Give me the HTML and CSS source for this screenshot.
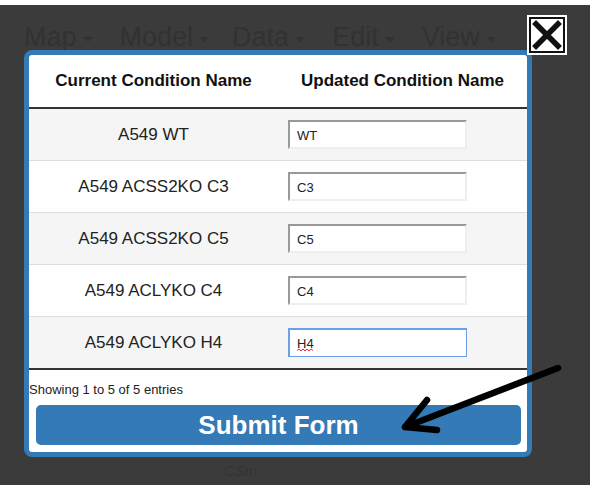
FILE: index.html
```html
<!DOCTYPE html>
<html>
<head>
<meta charset="utf-8">
<link rel="stylesheet" href="styles.css">
</head>
<body>
<div class="backdrop">
  <nav class="menu">
    <span>Map <i class="caret"></i></span>
    <span class="tight">Model <i class="caret"></i></span>
    <span>Data <i class="caret"></i></span>
    <span>Edit <i class="caret"></i></span>
    <span>View <i class="caret"></i></span>
  </nav>
  <div class="faint csm">CSm</div>

  <div class="modal">
    <table class="cond-table">
      <thead>
        <tr><th>Current Condition Name</th><th>Updated Condition Name</th></tr>
      </thead>
      <tbody>
        <tr><td>A549 WT</td><td class="edit"><input class="field" type="text" value="WT"></td></tr>
        <tr><td>A549 ACSS2KO C3</td><td class="edit"><input class="field" type="text" value="C3"></td></tr>
        <tr><td>A549 ACSS2KO C5</td><td class="edit"><input class="field" type="text" value="C5"></td></tr>
        <tr><td>A549 ACLYKO C4</td><td class="edit"><input class="field" type="text" value="C4"></td></tr>
        <tr><td>A549 ACLYKO H4</td><td class="edit"><span class="field-wrap"><input class="field field-focus" type="text" value="H4"><svg class="squiggle" width="16" height="4" viewBox="0 0 16 4"><path d="M0 2.5 L2 1 L4 3 L6 1 L8 3 L10 1 L12 3 L14 1 L16 2.5" stroke="#e23" stroke-width="1" fill="none"/></svg></span></td></tr>
      </tbody>
    </table>
    <div class="info">Showing 1 to 5 of 5 entries</div>
    <button class="submit">Submit Form</button>
  </div>

  <div class="close">
    <svg width="40" height="40" viewBox="0 0 40 40">
      <rect x="0" y="0" width="40" height="40" fill="#fff"/>
      <rect x="3" y="3" width="34" height="34" fill="#fff" stroke="#111" stroke-width="2"/>
      <path d="M9 9 L31 31 M31 9 L9 31" stroke="#111" stroke-width="5.5" stroke-linecap="square"/>
    </svg>
  </div>

  <svg class="arrow" width="599" height="485" viewBox="0 0 599 485">
    <path d="M558 368 L405 427 M405 427 L427 400 M405 427 L437 430" stroke="#000" stroke-width="6.5" stroke-linecap="round" stroke-linejoin="round" fill="none"/>
  </svg>
</div>
</body>
</html>
```
FILE: styles.css
```css
html, body {
  margin: 0;
  padding: 0;
  background: #fff;
  font-family: "Liberation Sans", Arial, sans-serif;
}

.backdrop {
  position: relative;
  margin-top: 5px;
  width: 590px;
  height: 480px;
  background: #3b3b3b;
  overflow: hidden;
}

.menu {
  display: flex;
  padding: 17px 0 0 24px;
  font-size: 27px;
  color: #313234;
}
.menu span { margin-right: 27px; display: flex; align-items: center; }
.menu span.tight { margin-right: 23px; }
.caret {
  display: inline-block;
  width: 0; height: 0;
  margin-left: 6px;
  margin-top: 4px;
  border-left: 5px solid transparent;
  border-right: 5px solid transparent;
  border-top: 5px solid #313234;
}

.faint { position: absolute; color: #333; font-size: 15px; font-style: italic; }
.csm { left: 224px; top: 457px; }

.modal {
  position: absolute;
  left: 24px;
  top: 45px;
  width: 498px;
  background: #fff;
  border: 5px solid #337ab7;
  border-radius: 8px;
  display: flex;
  flex-direction: column;
}

.cond-table {
  width: 100%;
  border-collapse: collapse;
  table-layout: fixed;
  font-size: 17px;
  color: #222;
}
.cond-table th {
  height: 52px;
  padding: 0;
  font-weight: bold;
  color: #111;
  text-align: center;
  border-bottom: 2px solid #333;
  vertical-align: middle;
}
.cond-table td {
  height: 51px;
  padding: 0;
  text-align: center;
  vertical-align: middle;
  border-top: 1px solid #ddd;
}
.cond-table tbody tr:first-child td { border-top: none; }
.cond-table tbody tr:nth-child(odd) td { background: #f5f5f5; }
.cond-table tbody tr:last-child td { border-bottom: 2px solid #333; }
.cond-table td.edit { text-align: left; padding-left: 10px; }

.field {
  box-sizing: border-box;
  width: 179px;
  height: 29px;
  padding: 1px 7px 0;
  border: 2px solid #eee;
  border-top-color: #999;
  border-left-color: #999;
  background: #fff;
  font-family: "Liberation Sans", Arial, sans-serif;
  font-size: 13px;
  color: #222;
  outline: none;
  vertical-align: middle;
}
.field-wrap { position: relative; display: inline-block; vertical-align: middle; }
.field-wrap .field { display: block; }
.field-focus {
  border: 1px solid #6d9fe8;
  box-shadow: inset 1px 1px 0 #999;
  padding-left: 8px;
}
.squiggle {
  position: absolute;
  left: 9px;
  top: 20px;
}

.info {
  font-size: 13px;
  color: #222;
  padding: 12px 0 0 0;
  line-height: 16px;
}

.submit {
  margin: 7px 6px 7px 7px;
  height: 40px;
  border: none;
  border-radius: 5px;
  background: #337ab7;
  color: #fff;
  font-family: "Liberation Sans", Arial, sans-serif;
  font-size: 26px;
  font-weight: bold;
  padding: 0;
}

.close {
  position: absolute;
  left: 527px;
  top: 10px;
  width: 40px;
  height: 40px;
}
.close svg { display: block; }

.arrow {
  position: absolute;
  left: 0;
  top: -5px;
  pointer-events: none;
}
```
